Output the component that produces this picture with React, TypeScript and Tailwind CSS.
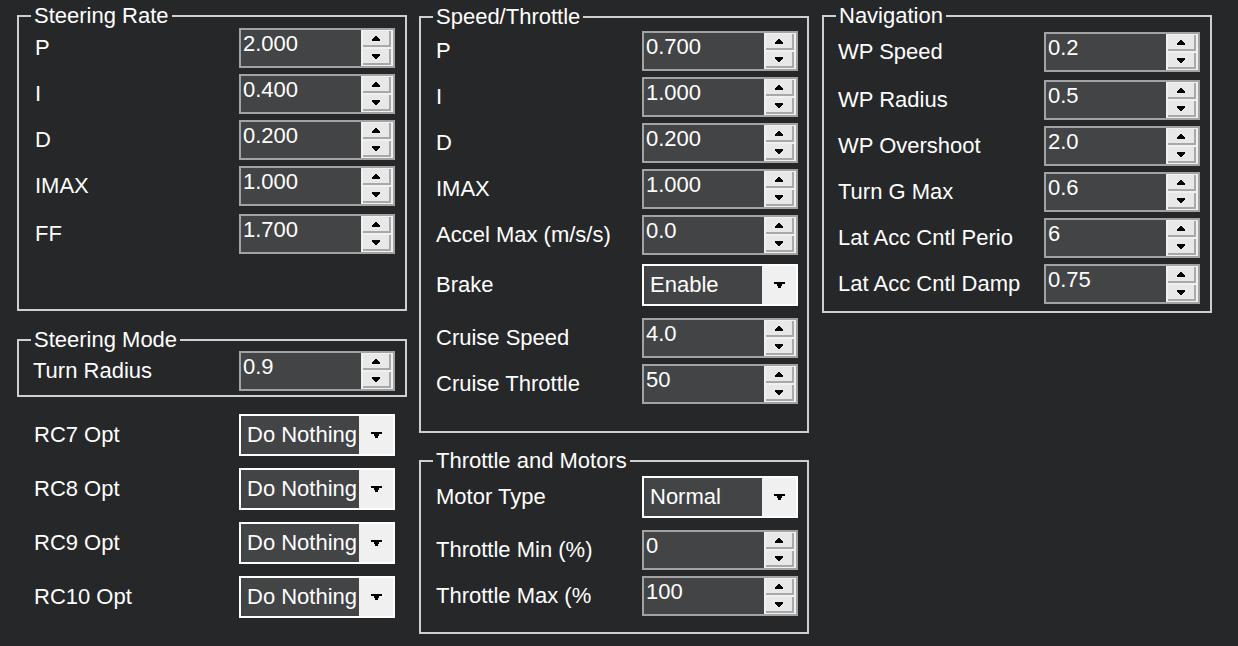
import React from "react";

const font = { fontFamily: '"Liberation Sans", Arial, sans-serif' };

function UpArrow() {
  return (
    <svg width="10" height="5" viewBox="0 0 10 5" shapeRendering="crispEdges">
      <path d="M4 0H6V1H7V2H8V3H9V5H1V3H2V2H3V1H4Z" fill="#000" />
    </svg>
  );
}

function DownArrow() {
  return (
    <svg width="10" height="5" viewBox="0 0 10 5" shapeRendering="crispEdges">
      <path d="M1 0H9V2H8V3H7V4H6V5H4V4H3V3H2V2H1Z" fill="#000" />
    </svg>
  );
}

function ComboArrow() {
  return (
    <svg width="11" height="6" viewBox="0 0 11 6" shapeRendering="crispEdges">
      <path d="M0 0H11V2H8V4H7V6H4V4H3V2H0Z" fill="#000" />
    </svg>
  );
}

function Spinner({ value }: { value: string }) {
  return (
    <div className="flex h-[40px] w-[156px] shrink-0 border-2 border-[#a3a3a3] bg-[#434446]">
      <div className="flex-1 pl-[2px] pt-[2px] text-[22px] leading-[24px] text-white">{value}</div>
      <div className="flex w-[32px] flex-col gap-[2px] border-l-2 border-[#f0f0f0] bg-[#f0f0f0] py-[1px] pr-[2px]">
        <div className="flex flex-1 items-center justify-center border-b-2 border-r-2 border-[#a8a8a8] bg-[#e8e8e8]">
          <UpArrow />
        </div>
        <div className="flex flex-1 items-center justify-center border-b-2 border-r-2 border-[#a8a8a8] bg-[#e8e8e8]">
          <DownArrow />
        </div>
      </div>
    </div>
  );
}

function Combo({ value }: { value: string }) {
  return (
    <div className="flex h-[42px] w-[156px] shrink-0 border-2 border-white bg-[#434446]">
      <div className="flex flex-1 items-center pl-[6px] text-[22px] leading-[24px] text-white">{value}</div>
      <div className="flex w-[34px] items-center justify-center bg-[#f0f0f0]">
        <ComboArrow />
      </div>
    </div>
  );
}

function Row({ label, children, className = "" }: { label: string; children: React.ReactNode; className?: string }) {
  return (
    <div className={`flex items-center justify-between ${className}`}>
      <span className="whitespace-nowrap text-[22px] leading-[24px] text-white">{label}</span>
      {children}
    </div>
  );
}

function Group({
  title,
  className = "",
  bodyClass = "",
  children,
}: {
  title: string;
  className?: string;
  bodyClass?: string;
  children: React.ReactNode;
}) {
  return (
    <fieldset className={`border-2 border-[#cfcfcf] ${className}`}>
      <legend className="ml-[12px] px-[3px] text-[22px] leading-[22px] text-white">{title}</legend>
      <div className={bodyClass}>{children}</div>
    </fieldset>
  );
}

export default function App() {
  return (
    <div className="flex min-h-screen w-full bg-[#262729] pl-[17px]" style={font}>
      {/* left column */}
      <div className="flex w-[390px] flex-col">
        <Group title="Steering Rate" className="mt-[5px]" bodyClass="flex flex-col gap-[6px] pl-[16px] pr-[10px] pt-[1px] pb-[55px]">
          <Row label="P"><Spinner value="2.000" /></Row>
          <Row label="I"><Spinner value="0.400" /></Row>
          <Row label="D"><Spinner value="0.200" /></Row>
          <Row label="IMAX"><Spinner value="1.000" /></Row>
          <Row label="FF" className="mt-[2px]"><Spinner value="1.700" /></Row>
        </Group>

        <Group title="Steering Mode" className="mt-[18px]" bodyClass="pl-[14px] pr-[10px] pb-[4px]">
          <Row label="Turn Radius"><Spinner value="0.9" /></Row>
        </Group>

        <div className="mt-[17px] flex flex-col gap-[12px] pl-[17px] pr-[12px]">
          <Row label="RC7 Opt"><Combo value="Do Nothing" /></Row>
          <Row label="RC8 Opt"><Combo value="Do Nothing" /></Row>
          <Row label="RC9 Opt"><Combo value="Do Nothing" /></Row>
          <Row label="RC10 Opt"><Combo value="Do Nothing" /></Row>
        </div>
      </div>

      {/* middle column */}
      <div className="ml-[12px] flex w-[390px] flex-col">
        <Group title="Speed/Throttle" className="mt-[6px]" bodyClass="flex flex-col pl-[15px] pr-[9px] pt-[3px] pb-[27px]">
          <div className="flex flex-col gap-[6px]">
            <Row label="P"><Spinner value="0.700" /></Row>
            <Row label="I"><Spinner value="1.000" /></Row>
            <Row label="D"><Spinner value="0.200" /></Row>
            <Row label="IMAX"><Spinner value="1.000" /></Row>
            <Row label="Accel Max (m/s/s)"><Spinner value="0.0" /></Row>
          </div>
          <Row label="Brake" className="mt-[9px]"><Combo value="Enable" /></Row>
          <div className="mt-[12px] flex flex-col gap-[6px]">
            <Row label="Cruise Speed"><Spinner value="4.0" /></Row>
            <Row label="Cruise Throttle"><Spinner value="50" /></Row>
          </div>
        </Group>

        <Group title="Throttle and Motors" className="mt-[17px]" bodyClass="flex flex-col pl-[15px] pr-[9px] pt-[4px] pb-[16px]">
          <Row label="Motor Type"><Combo value="Normal" /></Row>
          <div className="mt-[12px] flex flex-col gap-[6px]">
            <Row label="Throttle Min (%)"><Spinner value="0" /></Row>
            <Row label="Throttle Max (%"><Spinner value="100" /></Row>
          </div>
        </Group>
      </div>

      {/* right column */}
      <div className="ml-[13px] flex w-[390px] flex-col">
        <Group title="Navigation" className="mt-[5px]" bodyClass="flex flex-col gap-[6px] pl-[14px] pr-[10px] pt-[5px] pb-[7px]">
          <Row label="WP Speed"><Spinner value="0.2" /></Row>
          <Row label="WP Radius" className="mt-[2px]"><Spinner value="0.5" /></Row>
          <Row label="WP Overshoot"><Spinner value="2.0" /></Row>
          <Row label="Turn G Max"><Spinner value="0.6" /></Row>
          <Row label="Lat Acc Cntl Perio"><Spinner value="6" /></Row>
          <Row label="Lat Acc Cntl Damp"><Spinner value="0.75" /></Row>
        </Group>
      </div>
    </div>
  );
}
